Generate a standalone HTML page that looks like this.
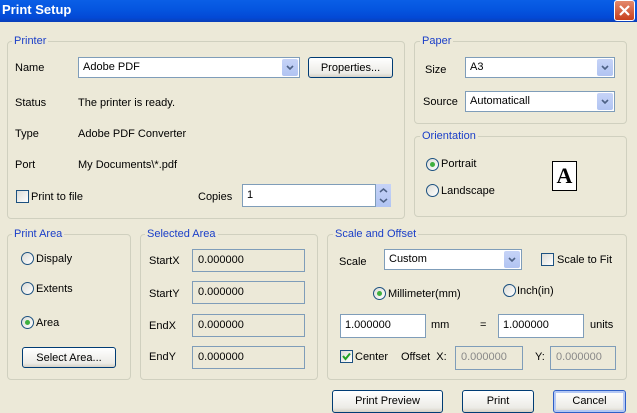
<!DOCTYPE html>
<html><head><style>
*{box-sizing:border-box;margin:0;padding:0}
body{width:637px;height:403px;overflow:hidden;background:#ece9d8;font-family:"Liberation Sans",sans-serif;font-size:11px;color:#000;position:relative}
.a{position:absolute;white-space:nowrap}
.title{left:0;top:0;width:637px;height:22px;background:linear-gradient(#0a5fe6,#0556e0 40%,#0349d6 80%,#0a3fb8);}
.tt{left:2px;top:2px;color:#fff;font-weight:bold;font-size:13px}
.close{left:614px;top:0;width:21px;height:21px;background:linear-gradient(#e48a6c,#c8401e);border:1px solid #fff;border-radius:3px}
.g{border:1px solid #d0d0bf;border-radius:4px}
.gl{color:#1a3ec8;background:#ece9d8;padding:0 2px}
.box{background:#fff;border:1px solid #7f9db9}
.dis{background:#ece9d8;border:1px solid #7f9db9;color:#888;padding:4px 0 0 5px}
.combo{background:#fff;border:1px solid #7f9db9;padding:3px 0 0 4px}
.dd{position:absolute;right:1px;top:1px;bottom:1px;width:16px;background:linear-gradient(#c6d3f7,#b1c4f2);border-radius:2px}
.dd svg{position:absolute;left:4px;top:6px}
.btn{background:linear-gradient(#fff,#ecebe6 80%,#d6d0c5);border:1px solid #003c74;border-radius:3px;text-align:center;padding-top:4px}
.rad{width:13px;height:13px;border:1px solid #1c5180;border-radius:50%;background:linear-gradient(135deg,#dcdcd6,#fff)}
.rad.on::after{content:"";position:absolute;left:3px;top:3px;width:5px;height:5px;border-radius:50%;background:#3fb03f}
.chk{width:13px;height:13px;border:1px solid #1c5180;background:linear-gradient(135deg,#dcdcd6,#fff)}
</style></head><body>
<div class="a title"></div>
<div class="a tt">Print Setup</div>
<div class="a close"><svg width="19" height="19" style="position:absolute;left:0;top:0"><path d="M5 5L14 14M14 5L5 14" stroke="#fff" stroke-width="2.2"/></svg></div>

<div class="a g" style="left:7px;top:41px;width:398px;height:178px"></div>
<div class="a gl" style="left:12px;top:35px">Printer</div>
<div class="a" style="left:15px;top:62px">Name</div>
<div class="a combo" style="left:78px;top:57px;width:222px;height:21px">Adobe PDF<div class="dd"><svg width="8" height="6"><path d="M1 1L4 4L7 1" stroke="#4d6185" stroke-width="1.6" fill="none"/></svg></div></div>
<div class="a btn" style="left:308px;top:57px;width:85px;height:21px">Properties...</div>
<div class="a" style="left:15px;top:97px">Status</div>
<div class="a" style="left:78px;top:97px">The printer is ready.</div>
<div class="a" style="left:15px;top:128px">Type</div>
<div class="a" style="left:78px;top:128px">Adobe PDF Converter</div>
<div class="a" style="left:15px;top:159px">Port</div>
<div class="a" style="left:78px;top:159px">My Documents\*.pdf</div>
<div class="a chk" style="left:16px;top:190px"></div>
<div class="a" style="left:31px;top:191px">Print to file</div>
<div class="a" style="left:198px;top:191px">Copies</div>
<div class="a box" style="left:242px;top:184px;width:134px;height:23px;padding:4px 0 0 4px">1</div>
<div class="a" style="left:376px;top:184px;width:15px;height:23px;background:linear-gradient(#c6d3f7,#b1c4f2)"><svg width="15" height="23"><path d="M4 8L7.5 5L11 8M4 15L7.5 18L11 15" stroke="#4d6185" stroke-width="1.5" fill="none"/></svg></div>

<div class="a g" style="left:414px;top:41px;width:213px;height:83px"></div>
<div class="a gl" style="left:420px;top:35px">Paper</div>
<div class="a" style="left:425px;top:64px">Size</div>
<div class="a combo" style="left:465px;top:57px;width:150px;height:21px">A3<div class="dd"><svg width="8" height="6"><path d="M1 1L4 4L7 1" stroke="#4d6185" stroke-width="1.6" fill="none"/></svg></div></div>
<div class="a" style="left:423px;top:96px">Source</div>
<div class="a combo" style="left:465px;top:91px;width:150px;height:21px">Automaticall<div class="dd"><svg width="8" height="6"><path d="M1 1L4 4L7 1" stroke="#4d6185" stroke-width="1.6" fill="none"/></svg></div></div>

<div class="a g" style="left:414px;top:136px;width:213px;height:81px"></div>
<div class="a gl" style="left:420px;top:130px">Orientation</div>
<div class="a rad on" style="left:426px;top:158px"></div>
<div class="a" style="left:441px;top:158px">Portrait</div>
<div class="a rad" style="left:426px;top:184px"></div>
<div class="a" style="left:441px;top:185px">Landscape</div>
<div class="a" style="left:552px;top:161px;width:25px;height:30px;background:#fff;border:1px solid #000;font-family:'Liberation Serif',serif;font-size:22px;line-height:28px;text-align:center;font-weight:bold">A</div>

<div class="a g" style="left:7px;top:234px;width:124px;height:146px"></div>
<div class="a gl" style="left:12px;top:228px">Print Area</div>
<div class="a rad" style="left:21px;top:252px"></div>
<div class="a" style="left:36px;top:253px">Dispaly</div>
<div class="a rad" style="left:21px;top:282px"></div>
<div class="a" style="left:36px;top:283px">Extents</div>
<div class="a rad on" style="left:21px;top:316px"></div>
<div class="a" style="left:36px;top:317px">Area</div>
<div class="a btn" style="left:22px;top:347px;width:94px;height:21px">Select Area...</div>

<div class="a g" style="left:140px;top:234px;width:178px;height:146px"></div>
<div class="a gl" style="left:145px;top:228px">Selected Area</div>
<div class="a" style="left:149px;top:255px">StartX</div>
<div class="a dis" style="left:192px;top:249px;width:113px;height:23px;color:#000">0.000000</div>
<div class="a" style="left:149px;top:288px">StartY</div>
<div class="a dis" style="left:192px;top:281px;width:113px;height:23px;color:#000">0.000000</div>
<div class="a" style="left:149px;top:320px">EndX</div>
<div class="a dis" style="left:192px;top:314px;width:113px;height:23px;color:#000">0.000000</div>
<div class="a" style="left:149px;top:351px">EndY</div>
<div class="a dis" style="left:192px;top:346px;width:113px;height:23px;color:#000">0.000000</div>

<div class="a g" style="left:327px;top:234px;width:300px;height:146px"></div>
<div class="a gl" style="left:333px;top:228px">Scale and Offset</div>
<div class="a" style="left:339px;top:256px">Scale</div>
<div class="a combo" style="left:384px;top:249px;width:138px;height:21px">Custom<div class="dd"><svg width="8" height="6"><path d="M1 1L4 4L7 1" stroke="#4d6185" stroke-width="1.6" fill="none"/></svg></div></div>
<div class="a chk" style="left:541px;top:253px"></div>
<div class="a" style="left:557px;top:254px">Scale to Fit</div>
<div class="a rad on" style="left:373px;top:287px"></div>
<div class="a" style="left:388px;top:288px">Millimeter(mm)</div>
<div class="a rad" style="left:503px;top:284px"></div>
<div class="a" style="left:517px;top:285px">Inch(in)</div>
<div class="a box" style="left:340px;top:314px;width:86px;height:24px;padding:4px 0 0 4px">1.000000</div>
<div class="a" style="left:431px;top:319px">mm</div>
<div class="a" style="left:480px;top:319px">=</div>
<div class="a box" style="left:498px;top:314px;width:86px;height:24px;padding:4px 0 0 4px">1.000000</div>
<div class="a" style="left:590px;top:319px">units</div>
<div class="a chk" style="left:340px;top:350px"><svg width="11" height="11" style="position:absolute;left:0;top:0"><path d="M2 5L4.5 8L9 2.5" stroke="#21a121" stroke-width="2" fill="none"/></svg></div>
<div class="a" style="left:355px;top:351px">Center</div>
<div class="a" style="left:401px;top:351px">Offset &nbsp;X:</div>
<div class="a dis" style="left:455px;top:346px;width:68px;height:24px">0.000000</div>
<div class="a" style="left:535px;top:351px">Y:</div>
<div class="a dis" style="left:550px;top:346px;width:66px;height:24px">0.000000</div>

<div class="a btn" style="left:332px;top:390px;width:111px;height:23px">Print Preview</div>
<div class="a btn" style="left:462px;top:390px;width:72px;height:23px">Print</div>
<div class="a btn" style="left:553px;top:390px;width:73px;height:23px;border-color:#2e5fc7;box-shadow:inset 0 0 0 2px #b4c8f4">Cancel</div>
</body></html>
